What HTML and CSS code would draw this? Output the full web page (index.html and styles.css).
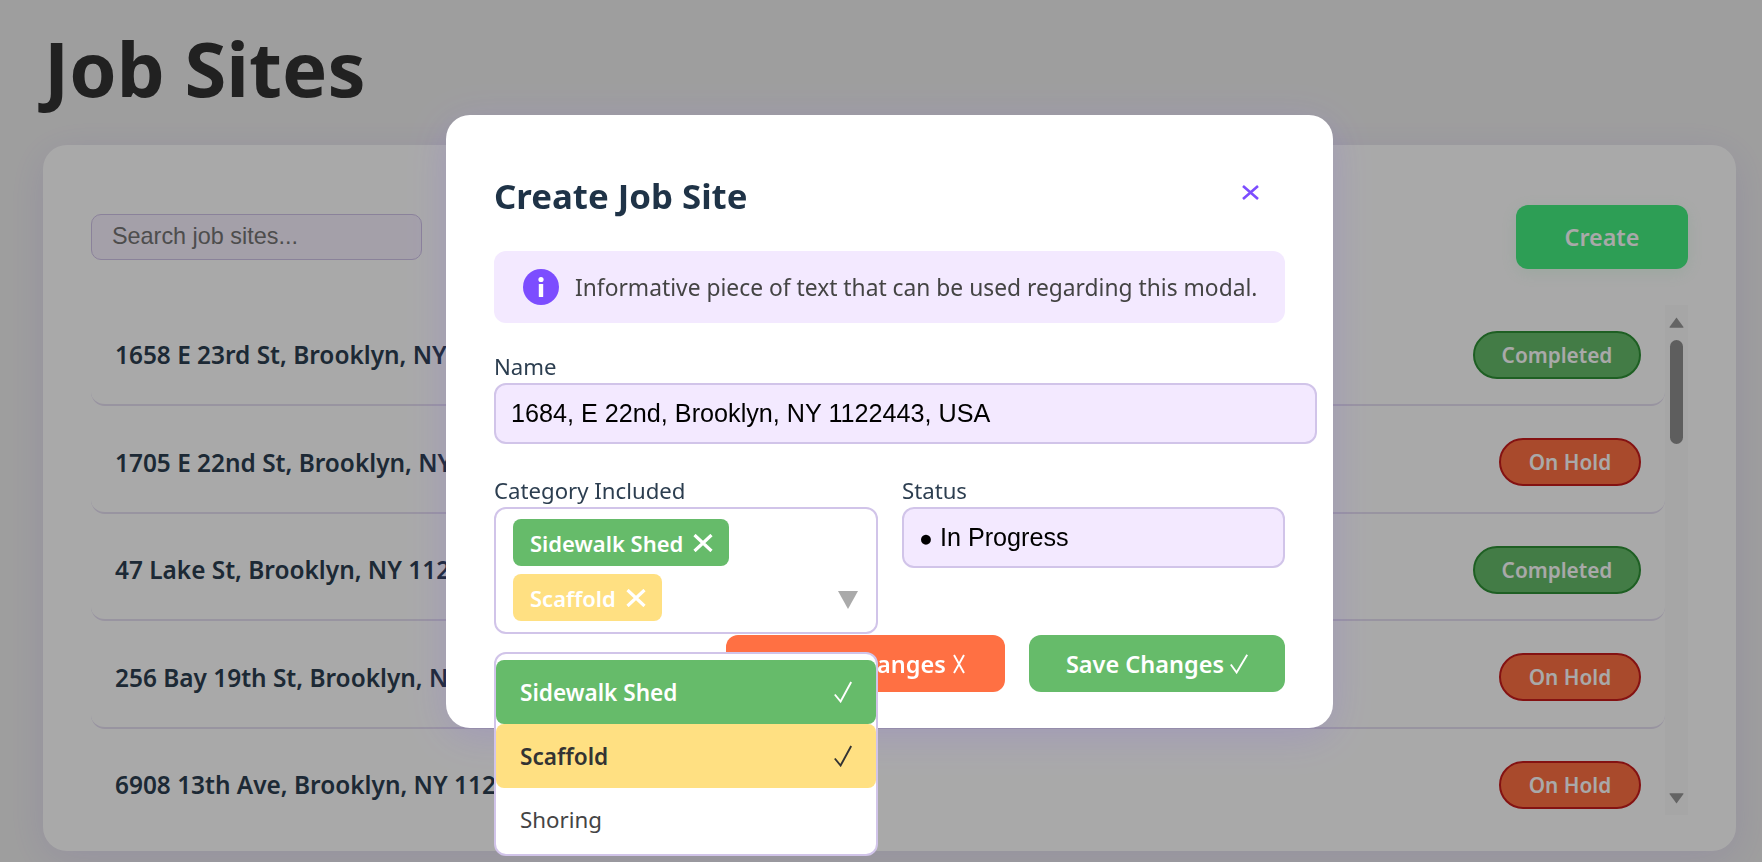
FILE: index.html
```html
<!DOCTYPE html>
<html lang="en">
<head>
<meta charset="utf-8">
<title>Job Sites</title>
<link rel="stylesheet" href="styles.css">
</head>
<body>
<main class="page">
  <h1 class="page-title">Job Sites</h1>
  <section class="card">
    <div class="toolbar">
      <input class="search" type="text" placeholder="Search job sites...">
      <button class="create-btn">Create</button>
    </div>
    <div class="list-wrap">
      <div class="list">
        <div class="row"><span class="addr">1658 E 23rd St, Brooklyn, NY 11229, USA</span><span class="pill done">Completed</span></div>
        <div class="row"><span class="addr">1705 E 22nd St, Brooklyn, NY 11229, USA</span><span class="pill hold">On Hold</span></div>
        <div class="row"><span class="addr">47 Lake St, Brooklyn, NY 11223, USA</span><span class="pill done">Completed</span></div>
        <div class="row"><span class="addr">256 Bay 19th St, Brooklyn, NY 11214, USA</span><span class="pill hold">On Hold</span></div>
        <div class="row"><span class="addr">6908 13th Ave, Brooklyn, NY 11219, USA</span><span class="pill hold">On Hold</span></div>
      </div>
      <div class="scrollbar">
        <svg class="arrow" width="15" height="11" viewBox="0 0 15 11"><path d="M7.5 0.5 L14.5 10 Q14.7 10.8 14 10.8 L1 10.8 Q0.3 10.8 0.5 10 Z"/></svg>
        <div class="thumb"></div>
        <svg class="arrow arrow-down" width="15" height="11" viewBox="0 0 15 11"><path d="M7.5 10.5 L14.5 1 Q14.7 0.2 14 0.2 L1 0.2 Q0.3 0.2 0.5 1 Z"/></svg>
      </div>
    </div>
  </section>
</main>

<div class="overlay">
  <div class="modal">
    <header class="modal-head">
      <h2 class="modal-title">Create Job Site</h2>
      <button class="close-btn" aria-label="Close">
        <svg width="17" height="15" viewBox="0 0 17 15"><path d="M1 1 L16 14 M16 1 L1 14"/></svg>
      </button>
    </header>
    <div class="info">
      <svg class="info-icon" width="36" height="36" viewBox="0 0 36 36"><circle cx="18" cy="18" r="18"/><circle class="info-i" cx="18" cy="10.5" r="2.6"/><rect class="info-i" x="15.8" y="15" width="4.4" height="13" rx="0.6"/></svg>
      <span class="info-text">Informative piece of text that can be used regarding this modal.</span>
    </div>
    <div class="field name-field">
      <label class="label">Name</label>
      <input class="text-input name-input" type="text" value="1684, E 22nd, Brooklyn, NY 1122443, USA">
    </div>
    <div class="columns">
      <div class="field">
        <label class="label">Category Included</label>
        <div class="multi">
          <span class="chip chip-green">Sidewalk Shed <svg class="chip-x" width="20" height="18" viewBox="0 0 20 18"><path d="M1.5 1 L18.5 17 M18.5 1 L1.5 17"/></svg></span>
          <span class="chip chip-yellow">Scaffold <svg class="chip-x" width="20" height="18" viewBox="0 0 20 18"><path d="M1.5 1 L18.5 17 M18.5 1 L1.5 17"/></svg></span>
          <svg class="caret" width="20" height="18" viewBox="0 0 20 18"><path d="M0 0 H20 L10 18 Z"/></svg>
          <div class="dropdown">
            <div class="option opt-green"><span>Sidewalk Shed</span><svg class="tick" width="18" height="22" viewBox="0 0 18 22"><path d="M0.8 13.5 L6.6 20.5 L17.2 1"/></svg></div>
            <div class="option opt-yellow"><span>Scaffold</span><svg class="tick" width="18" height="22" viewBox="0 0 18 22"><path d="M0.8 13.5 L6.6 20.5 L17.2 1"/></svg></div>
            <div class="option opt-plain"><span>Shoring</span></div>
          </div>
        </div>
      </div>
      <div class="field">
        <label class="label">Status</label>
        <div class="text-input status"><span class="dot">●</span> In Progress</div>
      </div>
    </div>
    <div class="actions">
      <button class="btn btn-cancel">Cancel Changes <svg class="btn-icon" width="14" height="20" viewBox="0 0 14 20"><path d="M2 1 L12 19 M12 1 L2 19"/></svg></button>
      <button class="btn btn-save">Save Changes <svg class="btn-icon" width="18" height="20" viewBox="0 0 18 20"><path d="M0.8 10.5 L6.6 18.5 L17.2 0.8"/></svg></button>
    </div>
  </div>
</div>
</body>
</html>
```

FILE: styles.css
```css
* { box-sizing: border-box; }
html, body { height: 100%; }
body {
  margin: 0;
  overflow: hidden;
  background: #efefef;
  font-family: "Noto Sans", "Open Sans", sans-serif;
  color: #2c3e50;
}
.page { padding: 0 26px 0 43px; }
.page-title {
  margin: 0;
  height: 145px;
  padding: 22px 0 0 1px;
  font-size: 76px;
  line-height: 92px;
  font-weight: 700;
  color: #333;
}
.card {
  height: 706px;
  padding: 60px 48px 0;
  background: #fff;
  border-radius: 24px;
  box-shadow: 0 8px 40px rgba(124, 77, 255, 0.12);
}
.toolbar { display: flex; align-items: center; justify-content: space-between; }
.search {
  width: 331px;
  height: 46px;
  padding: 0 20px 2px;
  background: #f8f1ff;
  border: 1px solid #d1c4e9;
  border-radius: 10px;
  font: 23.4px "Liberation Sans", sans-serif;
}
.search::placeholder { color: #757575; opacity: 1; }
.create-btn {
  width: 172px;
  height: 64px;
  border: 0;
  border-radius: 12px;
  background: #44ee80;
  color: #fff;
  font: 600 23.3px "Noto Sans", sans-serif;
  box-shadow: 0 4px 16px rgba(67, 233, 123, 0.12);
}
.list-wrap { display: flex; height: 510px; margin-top: 36px; overflow: hidden; }
.list { flex: 1; min-width: 0; display: flex; flex-direction: column; gap: 6.5px; }
.row {
  flex: none;
  display: flex;
  align-items: center;
  justify-content: space-between;
  height: 101px;
  padding: 0 24px;
  background: #fff;
  border-bottom: 2px solid #e6dff2;
  border-radius: 14px;
}
.addr { font-size: 24.4px; font-weight: 600; color: #2c3e50; }
.pill {
  display: flex;
  align-items: center;
  justify-content: center;
  height: 48px;
  border-radius: 24px;
  border: 2px solid;
  color: #fff;
  font-size: 20.8px;
  font-weight: 600;
}
.done { width: 168px; background: #66bb6a; border-color: #2e9036; }
.hold { width: 142px; background: #ff7043; border-color: #c81c1c; }
.scrollbar {
  position: relative;
  width: 23px;
  background: #fbfbfb;
  display: flex;
  flex-direction: column;
  align-items: center;
  padding-top: 12px;
}
.arrow { fill: #989898; display: block; }
.arrow-down { margin-top: auto; margin-bottom: 11px; }
.thumb { width: 13px; height: 104px; margin-top: 12px; border-radius: 7px; background: #8f8f8f; }
.overlay {
  position: fixed;
  inset: 0;
  padding: 115px 0 0 446px;
  background: rgba(0, 0, 0, 0.337);
}
.modal {
  width: 887px;
  padding: 48px 48px 36px;
  background: #fff;
  border-radius: 24px;
  box-shadow: 0 8px 40px rgba(124, 77, 255, 0.18);
}
.modal-head { display: flex; justify-content: space-between; height: 64px; margin-bottom: 24px; }
.modal-title { margin: 0; font-size: 34.8px; line-height: 66px; font-weight: 700; color: #1f3347; }
.close-btn {
  padding: 18px 26px 0 0;
  height: 40px;
  border: 0;
  background: none;
}
.close-btn svg { display: block; fill: none; stroke: #7c4dff; stroke-width: 2.6; }
.info {
  display: flex;
  align-items: center;
  gap: 16px;
  height: 72px;
  padding: 0 29px;
  background: #f3e9ff;
  border-radius: 12px;
}
.info-icon { flex: none; fill: #7c4dff; }
.info-i { fill: #fff; }
.info-text { font-size: 22.8px; color: #444; white-space: nowrap; }
.name-field { margin-top: 32px; }
.label { display: block; height: 28px; font-size: 22.2px; line-height: 24px; color: #2c3e50; }
.text-input {
  display: block;
  height: 61px;
  padding: 0 15px;
  background: #f3e9ff;
  border: 2px solid #d1c4e9;
  border-radius: 12px;
  font: 25.2px "Liberation Sans", sans-serif;
  color: #000;
}
.name-input { width: calc(100% + 32px); }
.status { line-height: 57px; }
.dot { font-size: 23px; }
.columns { display: grid; grid-template-columns: 384px 1fr; gap: 24px; margin-top: 35px; align-items: start; }
.multi {
  position: relative;
  display: flex;
  flex-wrap: wrap;
  align-content: flex-start;
  gap: 8px;
  height: 127px;
  padding: 10px 17px;
  background: #fff;
  border: 2px solid #d1c4e9;
  border-radius: 12px;
}
.chip {
  display: inline-flex;
  align-items: center;
  gap: 10px;
  height: 47px;
  padding: 0 16px 0 17px;
  border-radius: 8px;
  color: #fff;
  font-size: 22px;
  font-weight: 600;
  white-space: nowrap;
}
.chip-green { background: #66bb6a; }
.chip-yellow { background: #ffe082; }
.chip-x { fill: none; stroke: #fff; stroke-width: 3.2; }
.caret { position: absolute; right: 18px; bottom: 23px; fill: #aaa; }
.dropdown {
  position: absolute;
  z-index: 2;
  top: calc(100% + 20px);
  left: -2px;
  right: -2px;
  height: 204px;
  padding-top: 6px;
  background: #fff;
  border: 2px solid #d1c4e9;
  border-radius: 12px;
}
.option {
  display: flex;
  align-items: center;
  justify-content: space-between;
  height: 64px;
  padding: 0 24px;
  border-radius: 8px;
  font-size: 22.6px;
}
.opt-green { background: #66bb6a; color: #fff; font-weight: 600; }
.opt-yellow { background: #ffe082; color: #333; font-weight: 600; }
.opt-plain { color: #444; height: 62px; font-size: 22.3px; }
.tick { fill: none; stroke: currentColor; stroke-width: 1.9; }
.actions { display: flex; justify-content: flex-end; gap: 24px; margin-top: 1px; }
.btn {
  display: flex;
  align-items: center;
  justify-content: center;
  gap: 6px;
  height: 57px;
  padding-top: 1px;
  border: 0;
  border-radius: 12px;
  color: #fff;
  font: 600 23.5px "Noto Sans", sans-serif;
}
.btn-cancel { width: 279px; background: #ff7043; }
.btn-save { width: 256px; background: #66bb6a; }
.btn-icon { fill: none; stroke: #fff; stroke-width: 1.9; }
```
